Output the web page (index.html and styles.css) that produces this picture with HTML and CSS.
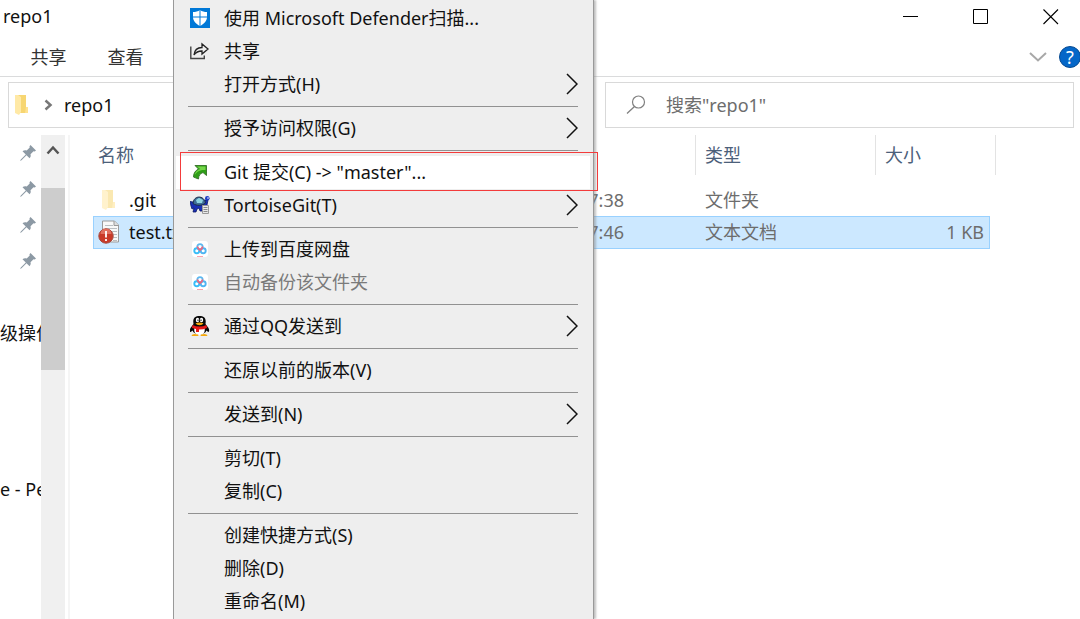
FILE: index.html
```html
<!DOCTYPE html>
<html lang="zh-CN">
<head>
<meta charset="utf-8">
<title>repo1</title>
<link rel="stylesheet" href="styles.css">
</head>
<body>
<svg class="defs" aria-hidden="true">
  <symbol id="pin" viewBox="0 0 16 16"><path d="M10.500 0L16 5.500l-1.300 1-1.200-.3-3 3c.5 1.600.2 2.800-.9 4L6.500 10.200 1.500 15.200 0 16l.8-1.500L5.800 9.500 2.500 6.300c1.200-1.100 2.600-1.400 4.200-.9l3-3-.2-1.200z" fill="#8c99a4"/></symbol>
  <symbol id="arrow" viewBox="0 0 12 22"><path d="M1 1l10 10L1 21" fill="none" stroke="#111" stroke-width="1.500"/></symbol>
  <symbol id="folder" viewBox="0 0 16 22"><path d="M3 1h9v12h2v6H3z" fill="#f7d672"/><path d="M1 1h3l3 2v15l-2 3-4-2z" fill="#ffe9a6"/><path d="M12 13h2v6h-3z" fill="#ffe291"/></symbol>
  <symbol id="cloud" viewBox="0 0 16 16"><rect width="16" height="16" rx="3" fill="#fff"/><circle cx="8" cy="5.800" r="2.700" fill="none" stroke="#5cb8f0" stroke-width="1.700"/><circle cx="4.800" cy="9.800" r="2.500" fill="none" stroke="#39bdf8" stroke-width="1.900"/><circle cx="11.200" cy="9.800" r="2.500" fill="none" stroke="#50b5f2" stroke-width="1.900"/><path d="M5.500 5.500C5.500 8 7 7.500 8 9c1-1.500 2.500-1 2.500-3.500" fill="none" stroke="#f0647c" stroke-width="1.800"/><path d="M5 15.500h6" stroke="#f9a3ad"/></symbol>
</svg>

<header class="titlebar">
  <h1 class="title">repo1</h1>
  <div class="controls">
    <button class="control" aria-label="最小化"><svg width="16" height="16"><path d="M0 7.500h15" stroke="#000"/></svg></button>
    <button class="control" aria-label="最大化"><svg width="16" height="16"><path d="M.5.5h14v14H.5z" fill="none" stroke="#000"/></svg></button>
    <button class="control" aria-label="关闭"><svg width="16" height="16"><path d="M.5.5l14.500 14.500M15 .5L.5 15" stroke="#000" stroke-width="1.100"/></svg></button>
  </div>
</header>
<nav class="ribbon">
  <button class="tab">共享</button>
  <button class="tab">查看</button>
  <span class="spacer"></span>
  <button class="expand" aria-label="展开功能区"><svg width="18" height="10"><path d="M1 1l8 7.500L17 1" fill="none" stroke="#a8a8a8" stroke-width="2"/></svg></button>
  <button class="help" aria-label="帮助">?</button>
</nav>
<div class="locationbar">
  <div class="address">
    <svg width="16" height="22"><use href="#folder"/></svg>
    <svg class="crumb" width="9" height="12"><path d="M1.500 1.500L6.500 6l-5 4.500" fill="none" stroke="#777" stroke-width="2.500"/></svg>
    <span>repo1</span>
  </div>
  <label class="search">
    <svg width="20" height="20"><circle cx="12.500" cy="7" r="6" fill="none" stroke="#808080" stroke-width="1.200"/><path d="M8.500 11.500L1 18.500" stroke="#808080" stroke-width="1.300"/></svg>
    <input class="query" type="text" aria-label="搜索" placeholder='搜索"repo1"'>
  </label>
</div>

<main class="explorer">
  <aside class="sidebar">
    <div class="pinned">
      <svg><use href="#pin"/></svg>
      <svg><use href="#pin"/></svg>
      <svg><use href="#pin"/></svg>
      <svg><use href="#pin"/></svg>
    </div>
    <div class="entry entry-first">级操作</div>
    <div class="entry">e - Pe</div>
  </aside>
  <div class="scrollbar">
    <svg width="14" height="10"><path d="M1.500 8.500L7 2.500l5.500 6" fill="none" stroke="#555" stroke-width="2.500"/></svg>
    <div class="thumb"></div>
  </div>
  <section class="files">
    <table class="filelist">
      <colgroup><col class="col-name"><col class="col-date"><col class="col-type"><col class="col-size"><col class="col-end"></colgroup>
      <thead>
        <tr><th class="head-name">名称</th><th class="ruled"></th><th class="ruled">类型</th><th class="ruled" colspan="2">大小</th></tr>
      </thead>
      <tbody>
        <tr class="gap"><td colspan="5"></td></tr>
        <tr>
          <td class="name"><span class="file"><svg class="dim" width="16" height="22"><use href="#folder"/></svg>.git</span></td>
          <td class="date">17:38</td><td>文件夹</td><td></td><td></td>
        </tr>
        <tr class="selected">
          <td class="name"><span class="file"><svg width="22" height="24"><path d="M4.500 1h12l4 4v17h-16z" fill="#f8f8f8" stroke="#9a9a9a"/><path d="M16 1v4.500h5" fill="#ddd" stroke="#999"/><path d="M7 5.500h8M7 8.500h12M10 11.500h9M14 14.500h5M15 17.500h4M15 20.500h4" stroke="#b9bec2"/><circle cx="8" cy="16" r="7.200" fill="#c93a28" stroke="#a7483c"/><path d="M2.500 14a5.500 5.500 0 0 1 11 0" fill="#e0705f"/><path d="M8 11v6.500M8 19v2" stroke="#fff" stroke-width="1.800"/></svg>test.txt</span></td>
          <td class="date">17:46</td><td>文本文档</td><td class="size">1 KB</td><td></td>
        </tr>
      </tbody>
    </table>
  </section>
</main>

<div class="menu" role="menu">
  <button class="item" role="menuitem"><span class="icon"><svg width="20" height="20"><path d="M0 0h20v20H0z" fill="#0078d7"/><path d="M10 2c2 1.500 4.500 2 7 2v5c0 4-3 7-7 9-4-2-7-5-7-9V4c2.500 0 5-.5 7-2z" fill="#fff"/><path d="M10 1v18M2 9h16" stroke="#0078d7"/></svg></span>使用 Microsoft Defender扫描...</button>
  <button class="item" role="menuitem"><span class="icon"><svg width="20" height="18"><path d="M.8 4.500V16.500h13.500v-3" fill="none" stroke="#444" stroke-width="1.400"/><path d="M4 13C4.500 8 7.500 5.500 12 5.500V2l6 5-6 5V9C8.500 9 6 10 4 13z" fill="none" stroke="#222" stroke-width="1.300"/></svg></span>共享</button>
  <button class="item" role="menuitem"><span class="icon"></span>打开方式(H)<svg class="more"><use href="#arrow"/></svg></button>
  <hr class="rule">
  <button class="item" role="menuitem"><span class="icon"></span>授予访问权限(G)<svg class="more"><use href="#arrow"/></svg></button>
  <hr class="rule">
  <button class="item active" role="menuitem"><span class="icon"><svg width="16" height="16"><path d="M3 1.500h11.500v10L11 8.500c-3 1-4.500 3-4.500 6.500L1.500 13C1.500 9 3.500 6.500 6.500 5z" fill="#2f9f17" stroke="#3d7a30"/><path d="M5 2.500h8.500V6C9 5.500 4.500 7.500 2.800 11c.2-3 2.200-5 5.400-6z" fill="#74d648"/></svg></span>Git 提交(C) -&gt; "master"...</button>
  <button class="item" role="menuitem"><span class="icon"><svg width="20" height="20"><path d="M0 6.500l3 .5 2 2h9l1-4h3l-1 5-3 3-1 3h-3l-1-3-2 1-1 3H3l1-4-2 1-1-3z" fill="#1a2fb4" stroke="#0d1a66" stroke-width=".8"/><path d="M3 8.500C3.500 0 14 0 15.500 8c-3.500 3-9 3-12.500.5z" fill="#3f6f96" stroke="#1c2b48"/><path d="M6 5l3-2.200L13 5l-1 3H7z" fill="#8fd3df"/><circle cx="17.300" cy="3.300" r="2.300" fill="#1e3cc5"/><circle cx="18" cy="3" r=".8" fill="#fff"/><path d="M12.500 10.500h6v8h-6z" fill="#e8e8e8" stroke="#9a9a9a"/><path d="M13.500 12.500h4M13.500 14.500h4M13.500 16.500h4" stroke="#8a8a8a"/></svg></span>TortoiseGit(T)<svg class="more"><use href="#arrow"/></svg></button>
  <hr class="rule">
  <button class="item" role="menuitem"><span class="icon"><svg width="16" height="16"><use href="#cloud"/></svg></span>上传到百度网盘</button>
  <button class="item disabled" role="menuitem" disabled><span class="icon"><svg width="16" height="16"><use href="#cloud"/></svg></span>自动备份该文件夹</button>
  <hr class="rule">
  <button class="item" role="menuitem"><span class="icon"><svg width="20" height="20"><path d="M3.500 8C2.500 2 5 0 9.500 0S16.500 2 15.500 8l3 4c1 2 .8 4-.2 4l-2-1.500c-1 5-12.600 5-13.600 0l-2 1.500c-1 0-1.200-2-.2-4z" fill="#080808"/><path d="M4.500 12h10c1 4-1 7-5 7s-6-3-5-7z" fill="#fff"/><ellipse cx="7.500" cy="4" rx="1.700" ry="2.200" fill="#fff"/><ellipse cx="11.500" cy="4" rx="1.700" ry="2.200" fill="#fff"/><path d="M8 3.500v1.500M11 3.500v1.500" stroke="#000"/><path d="M5.500 7.300q4-1.500 8 0-1 2-4 2t-4-2z" fill="#f5a80b"/><path d="M2.500 9q7 3 14 0l.5 3q-3.500 1.500-8 1.500v2.500h-3v-3l-4-1z" fill="#e61717"/><path d="M1.500 19.500q1-2.500 6.500-1l.5 1.500H2zM17.500 19.500q-1-2.500-6.500-1l-.5 1.500H17z" fill="#f5a80b"/></svg></span>通过QQ发送到<svg class="more"><use href="#arrow"/></svg></button>
  <hr class="rule">
  <button class="item" role="menuitem"><span class="icon"></span>还原以前的版本(V)</button>
  <hr class="rule">
  <button class="item" role="menuitem"><span class="icon"></span>发送到(N)<svg class="more"><use href="#arrow"/></svg></button>
  <hr class="rule">
  <button class="item" role="menuitem"><span class="icon"></span>剪切(T)</button>
  <button class="item" role="menuitem"><span class="icon"></span>复制(C)</button>
  <hr class="rule">
  <button class="item" role="menuitem"><span class="icon"></span>创建快捷方式(S)</button>
  <button class="item" role="menuitem"><span class="icon"></span>删除(D)</button>
  <button class="item" role="menuitem"><span class="icon"></span>重命名(M)</button>
</div>
</body>
</html>
```
FILE: styles.css
```css
* { box-sizing: border-box; }
body {
  margin: 0;
  height: 100vh;
  display: flex;
  flex-direction: column;
  position: relative;
  overflow: hidden;
  background: #fff;
  color: #111;
  font: 18px/24px "Noto Sans", "Noto Sans CJK SC", sans-serif;
}
button, input { font: inherit; color: inherit; border: 0; padding: 0; background: none; }
svg { flex: none; display: block; }
.defs { position: absolute; width: 0; height: 0; }

.titlebar { display: flex; justify-content: space-between; height: 34px; padding-left: 3px; }
.title { margin: 0; font-size: 18px; font-weight: 400; line-height: 32px; }
.controls { display: flex; gap: 12px; }
.control { width: 58px; display: flex; align-items: center; justify-content: center; }

.ribbon { display: flex; align-items: center; height: 43px; padding-top: 4px; border-bottom: 1px solid #dadbdc; color: #333; }
.tab { width: 77px; padding-left: 20px; }
.spacer { flex: 1; }
.expand { margin-right: 12px; }
.help { width: 22px; height: 22px; margin-right: -1px; border: 1px solid #074a91; border-radius: 50%; background: #0567c8; color: #fff; line-height: 20px; }

.locationbar { display: flex; gap: 12px; padding: 5px 6px 0 8px; }
.address, .search { display: flex; align-items: center; height: 46px; border: 1px solid #d9d9d9; }
.address { flex: 1; padding: 0 0 1px 5px; }
.crumb { margin: 0 11px 0 14px; }
.search { flex: 0 0 469px; gap: 20px; padding-left: 20px; color: #6d6d6d; }
.query { flex: 1; min-width: 0; outline: 0; }
.query::placeholder { color: #6d6d6d; opacity: 1; }

.explorer { flex: 1; display: flex; min-height: 0; padding-top: 7px; }
.sidebar { width: 41px; overflow: hidden; white-space: nowrap; }
.pinned { display: grid; grid-auto-rows: 36px; align-items: center; justify-items: end; padding-right: 5px; }
.pinned svg { width: 16px; height: 16px; }
.entry { line-height: 36px; }
.entry-first { margin: 36px 0 120px; }
.scrollbar { width: 24px; background: #f0f0f0; display: flex; flex-direction: column; align-items: center; padding-top: 10px; }
.thumb { width: 24px; height: 182px; margin-top: 33px; background: #cdcdcd; }
.files { flex: 1; margin-left: 3px; padding-left: 23px; border-left: 2px solid #f5f5f5; }

.filelist { table-layout: fixed; width: 903px; border-collapse: separate; border-spacing: 0; color: #6d6d6d; }
.col-name { width: 423px; }
.col-date { width: 180px; }
.col-type { width: 180px; }
.col-size { width: 114px; }
.filelist th, .filelist td { padding: 0 0 0 9px; text-align: left; font-weight: 400; }
.filelist th { height: 40px; color: #4c607a; }
.filelist .head-name { padding-left: 5px; }
.filelist .ruled { border-right: 1px solid #e3e3e3; }
.filelist .gap td { height: 9px; line-height: 8px; }
.filelist td { height: 32px; }
.filelist .name { color: #111; padding-left: 5px; }
.file { display: grid; grid-template-columns: 22px auto; gap: 9px; align-items: center; }
.file svg { justify-self: center; }
.dim { opacity: .55; }
.filelist .date { text-align: right; padding-right: 72px; }
.filelist .size { text-align: right; padding-right: 5px; }
.filelist .selected td:not(:last-child) { height: 33px; padding-bottom: 2px; background: #cce8ff; border: solid #99d1ff; border-width: 1px 0; }
.filelist .selected td:first-child { border-left-width: 1px; padding-left: 4px; }
.filelist .selected td.size { border-right-width: 1px; }

.menu {
  position: absolute;
  top: 0;
  left: 173px;
  width: 421px;
  padding: 2px 3px 1px 2px;
  background: #eee;
  border: solid #999;
  border-width: 0 1px;
  box-shadow: 2px 0 2px #8888;
}
.item { position: relative; display: flex; align-items: center; width: 100%; height: 33px; padding: 0 12px 2px 14px; text-align: left; white-space: nowrap; color: #111; }
.icon { width: 20px; margin-right: 14px; display: flex; justify-content: center; }
.more { width: 12px; height: 22px; margin-left: auto; }
.disabled { color: #7a7a7a; }
.active { background: #fff; }
.active::after { content: ""; position: absolute; inset: -4px -8px -2px 4px; border: 1px solid #f33b3b; }
.rule { height: 1px; margin: 5px 12px; border: 0; background: #919191; }
```
